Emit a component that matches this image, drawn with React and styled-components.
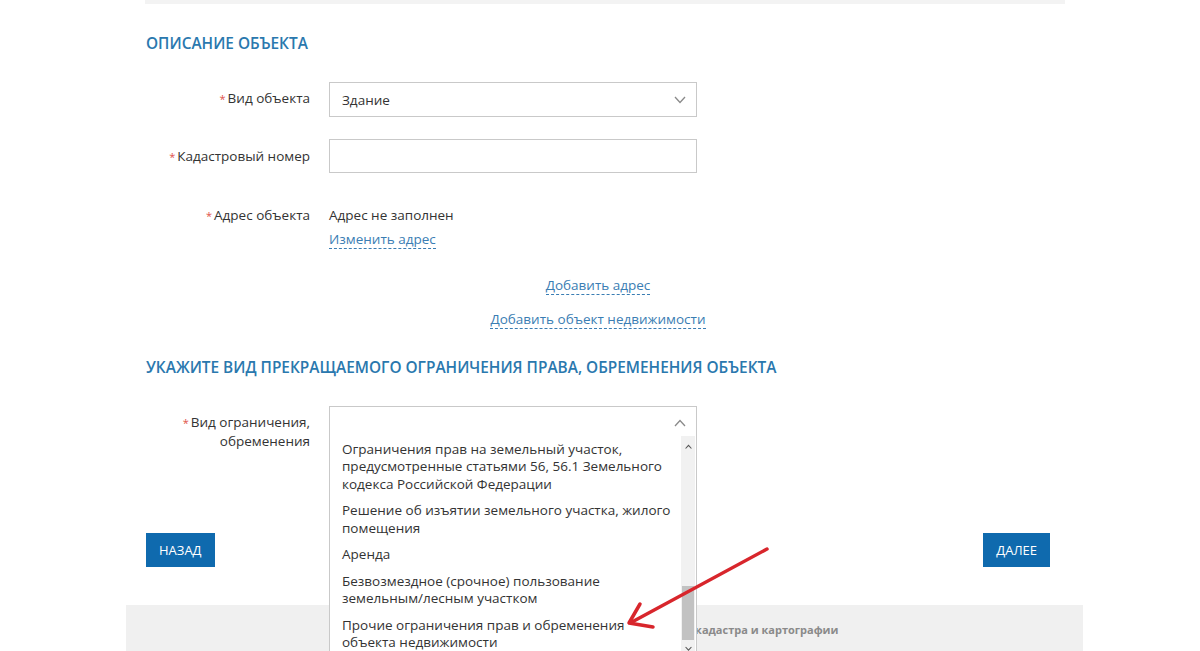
import React from 'react';
import styled, { createGlobalStyle } from 'styled-components';

const GlobalStyle = createGlobalStyle`
  html, body {
    margin: 0;
    padding: 0;
    background: #fff;
  }
  body {
    font-family: "Open Sans", "Liberation Sans", sans-serif;
    color: #333;
  }
`;

const Page = styled.div`
  position: relative;
  width: 1200px;
  height: 651px;
  overflow: hidden;
  background: #fff;
`;

const TopStrip = styled.div`
  margin-left: 145px;
  width: 920px;
  height: 4px;
  background: #f3f3f3;
`;

const Main = styled.main`
  margin-left: 146px;
  width: 904px;
  display: flex;
  flex-direction: column;
`;

const SectionTitle = styled.h2`
  margin: ${p => p.$top}px 0 0;
  font-size: 15.4px;
  font-weight: 600;
  line-height: 20px;
  color: #2a78ae;
  text-transform: uppercase;
`;

const FormRow = styled.div`
  display: grid;
  grid-template-columns: 164px 368px;
  column-gap: 19px;
  align-items: start;
  margin-top: ${p => p.$top}px;
`;

const Label = styled.label`
  text-align: right;
  font-size: 13.5px;
  line-height: 18px;
  padding-top: ${p => p.$pad || 0}px;
  color: #333;
`;

const Req = styled.span`
  color: #e0524a;
  font-size: 11px;
  margin-right: 2px;
`;

const SelectBox = styled.div`
  box-sizing: border-box;
  height: 35px;
  border: 1px solid #c9c9c9;
  display: flex;
  align-items: center;
  justify-content: space-between;
  padding: 0 10px 0 12px;
  font-size: 13.5px;
  color: #333;
`;

const TextInput = styled.input`
  box-sizing: border-box;
  height: 34px;
  width: 100%;
  border: 1px solid #c9c9c9;
  padding: 0 12px;
  font: inherit;
  outline: none;
`;

const ValueCol = styled.div`
  display: flex;
  flex-direction: column;
  align-items: flex-start;
  font-size: 13.5px;
  line-height: 18px;
`;

const DashLink = styled.a`
  display: inline-block;
  margin-top: ${p => p.$top || 0}px;
  font-size: 13.5px;
  line-height: 17px;
  color: #3a7db3;
  text-decoration: none;
  border-bottom: 1px dashed #3a7db3;
  cursor: pointer;
`;

const CenterLinks = styled.div`
  display: flex;
  flex-direction: column;
  align-items: center;
  gap: 16px;
  margin-top: 28px;
`;

const SelectWrap = styled.div`
  position: relative;
  height: 35px;
`;

const Dropdown = styled.div`
  position: absolute;
  top: 0;
  left: 0;
  right: 0;
  height: 252px;
  box-sizing: border-box;
  z-index: 2;
  background: #fff;
  border: 1px solid #c9c9c9;
  display: flex;
  flex-direction: column;
`;

const DropHead = styled.div`
  height: 29px;
  flex: none;
  display: flex;
  justify-content: flex-end;
  align-items: center;
  padding: 2px 10px 0 0;
  box-sizing: border-box;
`;

const ListArea = styled.div`
  flex: 1;
  display: flex;
  min-height: 0;
`;

const Options = styled.ul`
  flex: 1;
  margin: 0;
  padding: 0;
  list-style: none;
  overflow: hidden;
`;

const Option = styled.li`
  padding: 4.5px 10px 4.5px 12px;
  font-size: 13.5px;
  line-height: 17.5px;
  white-space: nowrap;
  color: #333;
`;

const Scrollbar = styled.div`
  width: 14px;
  margin-right: 1px;
  background: #f1f1f1;
  display: flex;
  flex-direction: column;
`;

const ScrollBtn = styled.div`
  height: ${p => p.$h}px;
  flex: none;
  display: flex;
  align-items: center;
  justify-content: center;
`;

const ScrollTrack = styled.div`
  flex: 1;
  display: flex;
  flex-direction: column;
`;

const Thumb = styled.div`
  margin-top: 129px;
  height: 54px;
  margin-left: 1px;
  margin-right: 1px;
  background: #c2c2c2;
`;

const ButtonRow = styled.div`
  display: flex;
  justify-content: space-between;
  margin-top: 83px;
`;

const Button = styled.button`
  height: 34px;
  padding: 0 ${p => p.$px}px;
  border: none;
  background: #0f6aae;
  color: #fff;
  font-family: "Open Sans", "Liberation Sans", sans-serif;
  font-size: 13px;
  text-transform: uppercase;
  cursor: pointer;
`;

const Footer = styled.footer`
  margin: 38px 0 0 126px;
  width: 957px;
  height: 60px;
  box-sizing: border-box;
  background: #f0f0f0;
  padding: 17px 0 0 248px;
  font-size: 11px;
  line-height: 16px;
  font-weight: 700;
  color: #8a8a8a;
  white-space: nowrap;
`;

const Annotation = styled.svg`
  position: absolute;
  left: 0;
  top: 0;
  z-index: 3;
  pointer-events: none;
`;

const Chevron = ({ up, size = 12, color = '#8a8a8a', width = 1.3 }) => (
  <svg width={size} height={size / 2 + 2} viewBox="0 0 12 8">
    <polyline
      points={up ? '1,7 6,1.5 11,7' : '1,1 6,6.5 11,1'}
      fill="none"
      stroke={color}
      strokeWidth={width}
    />
  </svg>
);

const restrictions = [
  ['Ограничения прав на земельный участок,', 'предусмотренные статьями 56, 56.1 Земельного', 'кодекса Российской Федерации'],
  ['Решение об изъятии земельного участка, жилого', 'помещения'],
  ['Аренда'],
  ['Безвозмездное (срочное) пользование', 'земельным/лесным участком'],
  ['Прочие ограничения прав и обременения', 'объекта недвижимости'],
];

export default function App() {
  return (
    <Page>
      <GlobalStyle />
      <TopStrip />
      <Main>
        <SectionTitle $top={30}>Описание объекта</SectionTitle>

        <FormRow $top={28}>
          <Label $pad={7}><Req>*</Req>Вид объекта</Label>
          <SelectBox>
            <span>Здание</span>
            <Chevron />
          </SelectBox>
        </FormRow>

        <FormRow $top={22}>
          <Label $pad={8}><Req>*</Req>Кадастровый номер</Label>
          <TextInput />
        </FormRow>

        <FormRow $top={33}>
          <Label><Req>*</Req>Адрес объекта</Label>
          <ValueCol>
            <span>Адрес не заполнен</span>
            <DashLink $top={7}>Изменить адрес</DashLink>
          </ValueCol>
        </FormRow>

        <CenterLinks>
          <DashLink>Добавить адрес</DashLink>
          <DashLink>Добавить объект недвижимости</DashLink>
        </CenterLinks>

        <SectionTitle $top={29}>Укажите вид прекращаемого ограничения права, обременения объекта</SectionTitle>

        <FormRow $top={28}>
          <Label $pad={7}><Req>*</Req>Вид ограничения,<br />обременения</Label>
          <SelectWrap>
            <Dropdown>
              <DropHead>
                <Chevron up />
              </DropHead>
              <ListArea>
                <Options>
                  {restrictions.map((lines, i) => (
                    <Option key={i}>
                      {lines.map((l, j) => (
                        <React.Fragment key={j}>
                          {j > 0 && <br />}
                          {l}
                        </React.Fragment>
                      ))}
                    </Option>
                  ))}
                </Options>
                <Scrollbar>
                  <ScrollBtn $h={21}>
                    <Chevron up size={7} color="#555" width={1.8} />
                  </ScrollBtn>
                  <ScrollTrack>
                    <Thumb />
                  </ScrollTrack>
                  <ScrollBtn $h={16}>
                    <Chevron size={7} color="#555" width={1.8} />
                  </ScrollBtn>
                </Scrollbar>
              </ListArea>
            </Dropdown>
          </SelectWrap>
        </FormRow>

        <ButtonRow>
          <Button $px={13}>Назад</Button>
          <Button $px={13}>Далее</Button>
        </ButtonRow>
      </Main>

      <Footer>© Федеральная служба государственной регистрации, кадастра и картографии</Footer>

      <Annotation width="1200" height="651" viewBox="0 0 1200 651">
        <g fill="none" stroke="#d8262c" strokeWidth="3.5" strokeLinecap="round" strokeLinejoin="round">
          <line x1="767" y1="549" x2="632" y2="622" />
          <polyline points="640,604 629,623 653,627" />
        </g>
      </Annotation>
    </Page>
  );
}
